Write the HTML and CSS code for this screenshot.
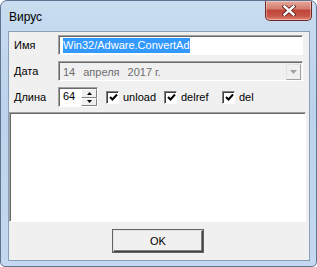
FILE: index.html
```html
<!DOCTYPE html>
<html lang="ru">
    <head>
        <meta charset="UTF-8">
        <title>Вирус</title>
        <link rel="stylesheet" href="styles.css">
    </head>
    <body>
        <div class="window">
            <div class="titlebar">
                <span class="title">Вирус</span>
                <div class="close">
                    <svg width="14" height="11" viewBox="0 0 14 11">
                        <path d="M2.5 1.5 L11.5 9.5 M11.5 1.5 L2.5 9.5" stroke="#5a1d18" stroke-width="4" stroke-linecap="square"/>
                        <path d="M2.5 1.5 L11.5 9.5 M11.5 1.5 L2.5 9.5" stroke="#fff" stroke-width="2.4" stroke-linecap="square"/>
                    </svg>
                </div>
            </div>
            <div class="client">
                <div class="form">
                    <span class="lbl">Имя</span>
                    <div class="edit"><span class="sel">Win32/Adware.ConvertAd</span></div>

                    <span class="lbl">Дата</span>
                    <div class="combo">
                        <span class="combo-text"><span class="d">14</span><span class="d">апреля</span><span class="d">2017 г.</span></span>
                        <span class="drop">
                            <svg width="7" height="4" viewBox="0 0 7 4"><path d="M0 0 H7 L3.5 4 Z" fill="#a0a0a0"/></svg>
                        </span>
                    </div>

                    <span class="lbl">Длина</span>
                    <div class="opts">
                        <div class="spin">
                            <div class="spin-edit">64</div>
                            <div class="spin-btns">
                                <span class="sb"><svg width="5" height="3" viewBox="0 0 5 3"><path d="M0 3 H5 L2.5 0 Z" fill="#000"/></svg></span>
                                <span class="sb"><svg width="5" height="3" viewBox="0 0 5 3"><path d="M0 0 H5 L2.5 3 Z" fill="#000"/></svg></span>
                            </div>
                        </div>
                        <label class="check">
                            <span class="box"><svg width="9" height="9" viewBox="0 0 9 9"><path d="M1 4 L3.5 6.5 L8 1.5" stroke="#000" stroke-width="2" fill="none"/></svg></span>unload
                        </label>
                        <label class="check">
                            <span class="box"><svg width="9" height="9" viewBox="0 0 9 9"><path d="M1 4 L3.5 6.5 L8 1.5" stroke="#000" stroke-width="2" fill="none"/></svg></span>delref
                        </label>
                        <label class="check">
                            <span class="box"><svg width="9" height="9" viewBox="0 0 9 9"><path d="M1 4 L3.5 6.5 L8 1.5" stroke="#000" stroke-width="2" fill="none"/></svg></span>del
                        </label>
                    </div>
                </div>

                <div class="memo"></div>

                <div class="buttons">
                    <button class="btn">OK</button>
                </div>
            </div>
        </div>
    </body>
</html>
```

FILE: styles.css
```css
body {
    margin: 0;
    background: #ffffff;
}
.window {
    width: 317px;
    height: 267px;
    box-sizing: border-box;
    border: 1px solid #5e7490;
    border-radius: 7px 7px 5px 5px;
    background: linear-gradient(180deg, #c9dcf0 0%, #bcd3eb 40%, #c4d9ef 100%);
    overflow: hidden;
}
.titlebar {
    height: 30px;
    display: flex;
    justify-content: space-between;
    align-items: flex-start;
    padding-left: 8px;
}
.title {
    font-family: "Liberation Sans", Arial, sans-serif;
    font-size: 12px;
    color: #000;
    margin-top: 9px;
}
.close {
    width: 47px;
    height: 20px;
    margin-right: 4px;
    box-sizing: border-box;
    border: 1px solid #6f2a24;
    border-top: none;
    border-radius: 0 0 5px 5px;
    background: linear-gradient(180deg, #e6a99e 0%, #d47e70 40%, #c0473a 50%, #c9574a 80%, #e08a78 100%);
    display: flex;
    align-items: center;
    justify-content: center;
    box-shadow: inset 0 0 0 1px rgba(255,255,255,0.35);
}
.client {
    margin: 0 6px 0 7px;
    height: 230px;
    box-sizing: border-box;
    border: 1px solid #8a9fb8;
    background: #f0f0f0;
    font-family: "Liberation Sans", Arial, sans-serif;
    font-size: 11px;
    color: #000;
    display: flex;
    flex-direction: column;
}
.form {
    display: grid;
    grid-template-columns: 44px 1fr;
    row-gap: 6px;
    padding: 3px 6px 0 5px;
    align-items: center;
}
.lbl {
    line-height: 20px;
}
.edit {
    height: 20px;
    box-sizing: border-box;
    background: #fff;
    border: 1px solid;
    border-color: #a0a0a0 #fff #fff #a0a0a0;
    box-shadow: inset 1px 1px #696969;
    padding: 1px 0 0 4px;
    display: flex;
    align-items: center;
}
.sel {
    background: #3399ff;
    color: #fff;
    line-height: 15px;
}
.combo {
    height: 20px;
    box-sizing: border-box;
    background: #f0f0f0;
    border: 1px solid;
    border-color: #a0a0a0 #fff #fff #a0a0a0;
    box-shadow: inset 1px 1px #696969;
    display: flex;
    align-items: center;
    justify-content: space-between;
    padding: 1px 1px 0 4px;
    color: #6d6d6d;
}
.combo-text .d {
    margin-right: 8px;
}
.drop {
    width: 15px;
    height: 16px;
    box-sizing: border-box;
    border: 1px solid;
    border-color: #e3e3e3 #a0a0a0 #a0a0a0 #e3e3e3;
    background: #f0f0f0;
    display: flex;
    align-items: center;
    justify-content: center;
}
.opts {
    display: flex;
    align-items: center;
    height: 20px;
}
.spin {
    display: flex;
    height: 20px;
    box-sizing: border-box;
    border: 1px solid;
    border-color: #a0a0a0 #fff #fff #a0a0a0;
    box-shadow: inset 1px 1px #696969;
    background: #fff;
    margin-right: 8px;
}
.spin-edit {
    width: 22px;
    padding: 2px 0 0 4px;
    box-sizing: border-box;
}
.spin-btns {
    width: 16px;
    display: flex;
    flex-direction: column;
    padding: 1px 0 0 0;
    box-sizing: border-box;
}
.sb {
    flex: 1;
    background: #f0f0f0;
    border: 1px solid;
    border-color: #fff #808080 #808080 #fff;
    display: flex;
    align-items: center;
    justify-content: center;
}
.check {
    width: 58px;
    display: flex;
    align-items: center;
    gap: 4px;
}
.box {
    width: 13px;
    height: 13px;
    box-sizing: border-box;
    background: #fff;
    border: 1px solid;
    border-color: #808080 #fff #fff #808080;
    box-shadow: inset 1px 1px #404040;
    display: flex;
    align-items: center;
    justify-content: center;
    padding: 1px 0 0 1px;
}
.memo {
    height: 110px;
    margin: 5px 3px 0 0;
    box-sizing: border-box;
    background: #fff;
    border: 1px solid;
    border-color: #a0a0a0 #fff #fff #a0a0a0;
    box-shadow: inset 1px 1px #696969;
}
.buttons {
    display: flex;
    justify-content: center;
    padding: 8px 2px 0 0;
}
.btn {
    width: 90px;
    height: 22px;
    font-family: "Liberation Sans", Arial, sans-serif;
    font-size: 11px;
    color: #000;
    background: #f0f0f0;
    border: 1px solid;
    border-color: #e3e3e3 #404040 #404040 #e3e3e3;
    box-shadow: inset -1px -1px #808080, 0 0 0 1px #646464;
    padding: 0;
}
```
